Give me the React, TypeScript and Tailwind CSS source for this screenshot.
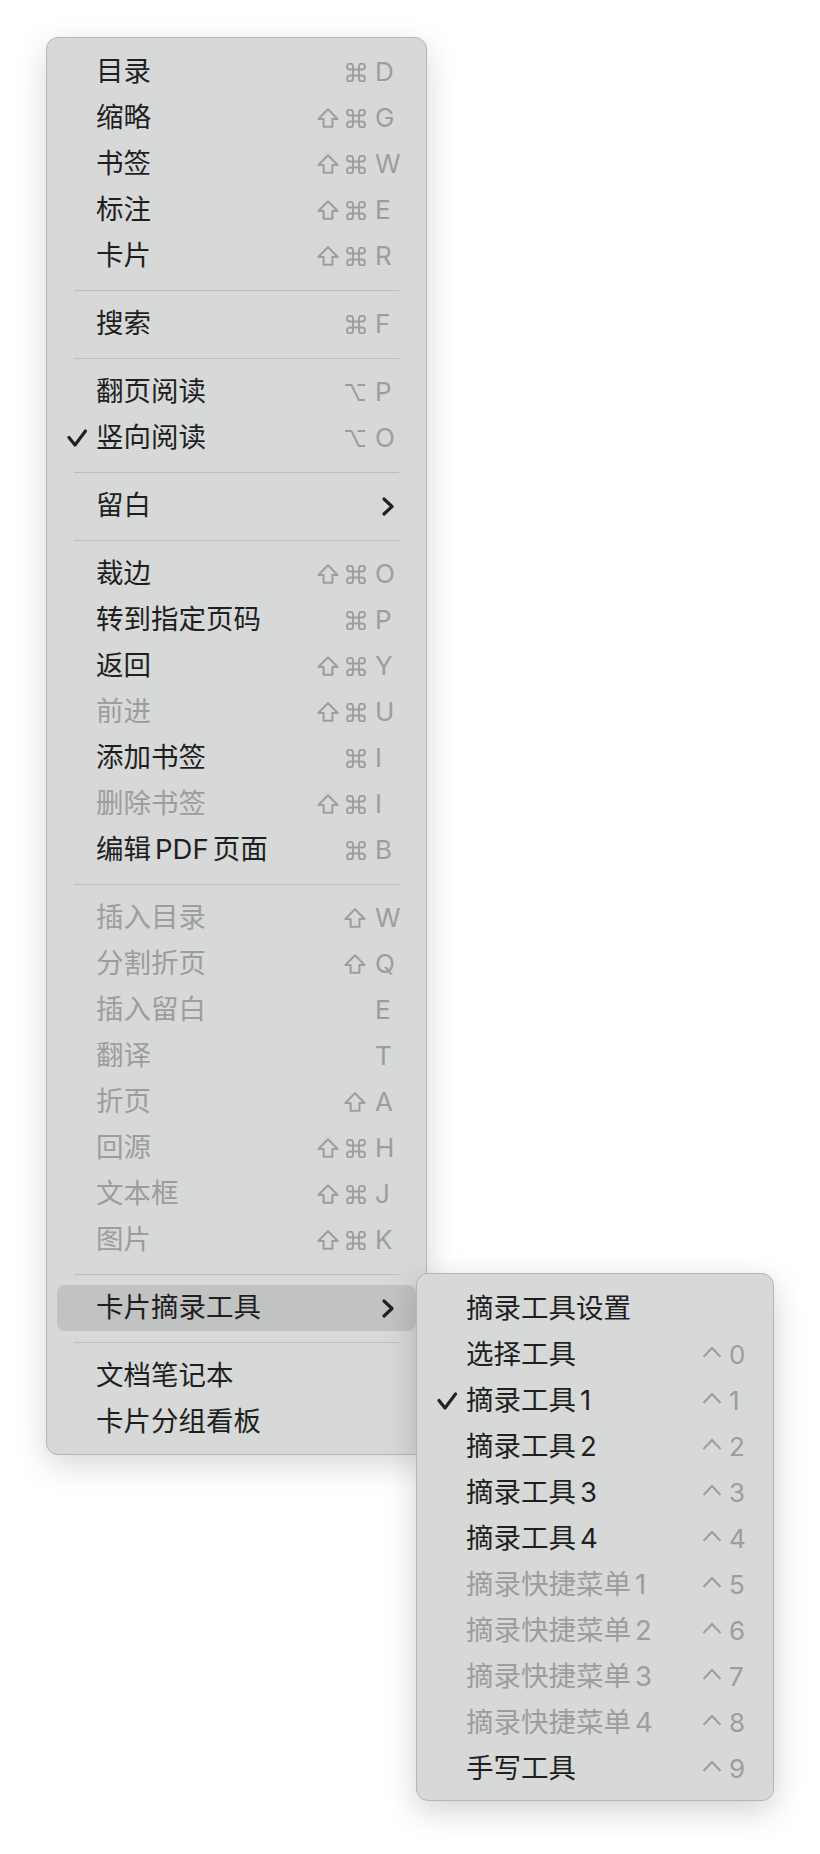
import React from "react";

type Mod = "shift" | "cmd" | "opt" | "ctrl";

const Check = () => (
  <svg width="20" height="18" viewBox="0 0 20 18" className="block">
    <path d="M2 8.5 L8 16 L18.5 2" fill="none" stroke="currentColor" strokeWidth="3.2" strokeLinecap="round" strokeLinejoin="round" />
  </svg>
);

const Chevron = () => (
  <svg width="12" height="19" viewBox="0 0 12 19" className="block">
    <path d="M2 2 L10 9.5 L2 17" fill="none" stroke="currentColor" strokeWidth="3.2" strokeLinecap="round" strokeLinejoin="round" />
  </svg>
);

const ModIcon = ({ m }: { m: Mod }) => {
  if (m === "shift")
    return (
      <svg width="22" height="20" viewBox="0 0 22 20" className="block">
        <path d="M11 1.3 L20.6 11 H15.4 V18.8 H6.6 V11 H1.4 Z" fill="none" stroke="currentColor" strokeWidth="2" strokeLinejoin="round" />
      </svg>
    );
  if (m === "cmd")
    return (
      <svg width="20" height="19" viewBox="2.5 2.5 19 19" className="block">
        <path d="M15 6v12a3 3 0 1 0 3-3H6a3 3 0 1 0 3 3V6a3 3 0 1 0-3 3h12a3 3 0 1 0-3-3" fill="none" stroke="currentColor" strokeWidth="1.9" strokeLinecap="round" strokeLinejoin="round" />
      </svg>
    );
  if (m === "opt")
    return (
      <svg width="22" height="19" viewBox="0 0 22 19" className="block">
        <path d="M1 2 H7.5 L14.8 17 H21 M13.5 2 H21" fill="none" stroke="currentColor" strokeWidth="2" />
      </svg>
    );
  return (
    <svg width="20" height="19" viewBox="0 0 20 19" className="block">
      <path d="M1.5 11 L10 2 L18.5 11" fill="none" stroke="currentColor" strokeWidth="2" strokeLinejoin="miter" />
    </svg>
  );
};

type Item = {
  label: React.ReactNode;
  check?: boolean;
  disabled?: boolean;
  mods?: Mod[];
  k?: string;
  sub?: boolean;
  active?: boolean;
};

const Row = ({ item, keyCol }: { item: Item; keyCol: "main" | "sub" }) => (
  <div
    className={
      "flex h-[46px] items-center rounded-[8px] " + (item.active ? "bg-[#c1c2c2]" : "")
    }
  >
    <div className="flex w-[39px] shrink-0 pl-[10px] text-[#222222]">{item.check ? <Check /> : null}</div>
    <div
      className={
        "flex-1 whitespace-nowrap text-[27.5px] leading-none " +
        (item.disabled ? "text-[#9d9d9d]" : "text-[#1f1f1f]")
      }
    >
      {item.label}
    </div>
    <div className="flex items-center justify-end gap-[7px] text-[#9d9d9d]">
      {(item.mods || []).map((m, i) => (
        <ModIcon key={i} m={m} />
      ))}
    </div>
    <div
      className={
        "flex shrink-0 items-center text-[26px] leading-none text-[#9d9d9d] " +
        (keyCol === "main" ? "w-[50px] pl-[9px]" : "w-[41px] pl-[7px]")
      }
    >
      {item.sub ? (
        <span className="ml-[7px] text-[#222222]">
          <Chevron />
        </span>
      ) : (
        item.k
      )}
    </div>
  </div>
);

const Sep = () => (
  <div className="flex h-[22px] items-center px-[17px]">
    <div className="h-px w-full bg-[#bcbdbd]" />
  </div>
);

const D = ({ children }: { children: React.ReactNode }) => <span className="ml-[4px]">{children}</span>;

type Entry = Item | "sep";

const mainItems: Entry[] = [
  { label: "目录", mods: ["cmd"], k: "D" },
  { label: "缩略", mods: ["shift", "cmd"], k: "G" },
  { label: "书签", mods: ["shift", "cmd"], k: "W" },
  { label: "标注", mods: ["shift", "cmd"], k: "E" },
  { label: "卡片", mods: ["shift", "cmd"], k: "R" },
  "sep",
  { label: "搜索", mods: ["cmd"], k: "F" },
  "sep",
  { label: "翻页阅读", mods: ["opt"], k: "P" },
  { label: "竖向阅读", check: true, mods: ["opt"], k: "O" },
  "sep",
  { label: "留白", sub: true },
  "sep",
  { label: "裁边", mods: ["shift", "cmd"], k: "O" },
  { label: "转到指定页码", mods: ["cmd"], k: "P" },
  { label: "返回", mods: ["shift", "cmd"], k: "Y" },
  { label: "前进", disabled: true, mods: ["shift", "cmd"], k: "U" },
  { label: "添加书签", mods: ["cmd"], k: "I" },
  { label: "删除书签", disabled: true, mods: ["shift", "cmd"], k: "I" },
  {
    label: (
      <>
        编辑<span className="mx-[4px]">PDF</span>页面
      </>
    ),
    mods: ["cmd"],
    k: "B",
  },
  "sep",
  { label: "插入目录", disabled: true, mods: ["shift"], k: "W" },
  { label: "分割折页", disabled: true, mods: ["shift"], k: "Q" },
  { label: "插入留白", disabled: true, k: "E" },
  { label: "翻译", disabled: true, k: "T" },
  { label: "折页", disabled: true, mods: ["shift"], k: "A" },
  { label: "回源", disabled: true, mods: ["shift", "cmd"], k: "H" },
  { label: "文本框", disabled: true, mods: ["shift", "cmd"], k: "J" },
  { label: "图片", disabled: true, mods: ["shift", "cmd"], k: "K" },
  "sep",
  { label: "卡片摘录工具", sub: true, active: true },
  "sep",
  { label: "文档笔记本" },
  { label: "卡片分组看板" },
];

const subItems: Item[] = [
  { label: "摘录工具设置" },
  { label: "选择工具", mods: ["ctrl"], k: "0" },
  { label: <>摘录工具<D>1</D></>, check: true, mods: ["ctrl"], k: "1" },
  { label: <>摘录工具<D>2</D></>, mods: ["ctrl"], k: "2" },
  { label: <>摘录工具<D>3</D></>, mods: ["ctrl"], k: "3" },
  { label: <>摘录工具<D>4</D></>, mods: ["ctrl"], k: "4" },
  { label: <>摘录快捷菜单<D>1</D></>, disabled: true, mods: ["ctrl"], k: "5" },
  { label: <>摘录快捷菜单<D>2</D></>, disabled: true, mods: ["ctrl"], k: "6" },
  { label: <>摘录快捷菜单<D>3</D></>, disabled: true, mods: ["ctrl"], k: "7" },
  { label: <>摘录快捷菜单<D>4</D></>, disabled: true, mods: ["ctrl"], k: "8" },
  { label: "手写工具", mods: ["ctrl"], k: "9" },
];

export default function App() {
  return (
    <div
      className="relative h-[1854px] w-[820px] overflow-hidden bg-white pl-[46px] pt-[37px]"
      style={{ fontFamily: 'Inter, "Noto Sans CJK SC", sans-serif' }}
    >
      <div className="w-[381px] rounded-[12px] border border-[#b4b5b5] bg-[#d7d8d8] px-[10px] pb-[9px] pt-[11px] shadow-[0_10px_32px_rgba(0,0,0,0.16)]">
        {mainItems.map((it, i) => (it === "sep" ? <Sep key={i} /> : <Row key={i} item={it} keyCol="main" />))}
      </div>
      <div className="absolute left-[416px] top-[1273px] w-[358px] rounded-[12px] border border-[#b4b5b5] bg-[#d7d8d8] px-[10px] pb-[8px] pt-[12px] shadow-[0_10px_32px_rgba(0,0,0,0.18)]">
        {subItems.map((it, i) => (
          <Row key={i} item={it} keyCol="sub" />
        ))}
      </div>
    </div>
  );
}
